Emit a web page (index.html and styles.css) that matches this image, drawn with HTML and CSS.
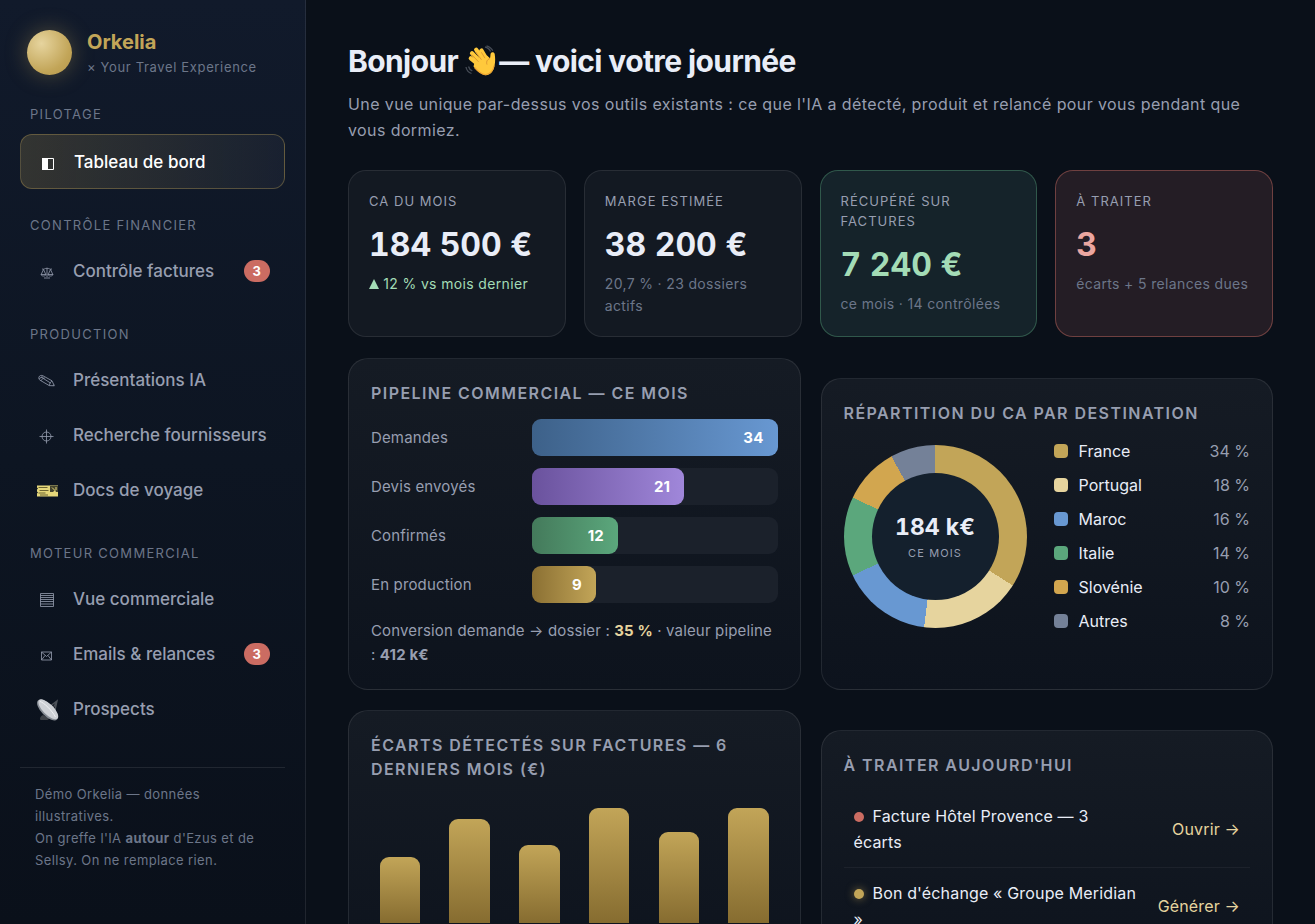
FILE: index.html
```html
<!DOCTYPE html>
<html lang="fr">
<head>
  <meta charset="UTF-8" />
  <meta name="viewport" content="width=device-width, initial-scale=1.0" />
  <title>Orkelia — Tableau de bord</title>
  <link rel="stylesheet" href="styles.css">
</head>
<body>
  <div class="app">
    <aside class="sidebar">
      <div class="brand">
        <div class="brand-orb"></div>
        <div>
          <div class="brand-name">Orkelia</div>
          <div class="brand-sub">× Your Travel Experience</div>
        </div>
      </div>

      <nav>
        <div class="nav-label">Pilotage</div>
        <a href="#dashboard" class="nav-item active">
          <svg class="ico" viewBox="0 0 22 22"><path d="M5.5 7.500h11v11h-11z" fill="none" stroke="currentColor"/><path d="M5 7h6v12H5z" fill="currentColor"/></svg>
          <span>Tableau de bord</span>
        </a>

        <div class="nav-label">Contrôle financier</div>
        <a href="#factures" class="nav-item">
          <svg class="ico thin" viewBox="0 0 22 22"><path d="M11 8v9M8 18h6M6 9c2 .8 3-.8 5-.8s3 1.600 5 .8M7.500 9.500l-2.300 5M7.500 9.500l2.300 5M14.500 9.500l-2.300 5M14.500 9.500l2.300 5M5 14.500c.5 2 4.500 2 5 0zM12 14.500c.5 2 4.500 2 5 0z"/></svg>
          <span>Contrôle factures</span>
          <span class="badge">3</span>
        </a>

        <div class="nav-label">Production</div>
        <a href="#presentations" class="nav-item">
          <svg class="ico thin" viewBox="0 0 22 22"><path d="M3 8c.6-1.600 2.500-2 4-1.200l9 5 2.300 5-5-.2-9.300-5.400C3 10.500 2.500 9.200 3 8zM3.500 10c.6-1.600 2-2.300 3.700-1.800M5.500 11.500c.4-1.500 1.700-2.500 3.300-2.500M13.300 16.600c.2-1.900 1.300-3.800 2.700-4.800M5 8l9.500 6M17.900 15.700l-.9 1"/></svg>
          <span>Présentations IA</span>
        </a>
        <a href="#fournisseurs" class="nav-item">
          <svg class="ico thin" viewBox="0 0 22 22"><circle cx="10.500" cy="12.500" r="4.500"/><path d="M10.500 5.500v14M3.500 12.500h14"/></svg>
          <span>Recherche fournisseurs</span>
        </a>
        <a href="#docs" class="nav-item">
          <svg class="ico" viewBox="0 0 22 22"><path d="M1 6.500h21v11H1v-3l1-1-1-1v-2l1-1-1-1z" fill="#e5d77a"/><path d="M2.500 8.500h9M3.500 11.500h9M2.500 14h7M4 16h8" stroke="#6d6532" stroke-width="1"/><path d="M14 7h8v6h-2l-1-2-2 2h-3z" fill="#45452e"/><path d="M16 8.500l3 3M20 8v3" stroke="#e5d77a"/></svg>
          <span>Docs de voyage</span>
        </a>

        <div class="nav-label">Moteur commercial</div>
        <a href="#ventes" class="nav-item">
          <svg class="ico thin" viewBox="0 0 22 22"><path d="M4.500 5.500h13v13h-13zM4.500 7.500h13M4.500 9.500h13M4.500 11.500h13M4.500 13.500h13M4.500 16h13"/></svg>
          <span>Vue commerciale</span>
        </a>
        <a href="#emails" class="nav-item">
          <svg class="ico thin" viewBox="0 0 22 22"><path d="M5.500 9h10v8h-10zM5.500 9l5 4.500 5-4.500M5.500 17L9 12.500M15.500 17L12 12.500"/></svg>
          <span>Emails &amp; relances</span>
          <span class="badge">3</span>
        </a>
        <a href="#prospects" class="nav-item">
          <svg class="ico" viewBox="0 0 22 22"><path d="M4 21c0-2 1-3 3-4l6 3c0 1.500-1 2-3 2H6c-1 0-2 0-2-1z" fill="#3d4147"/><path d="M13 9l8-6-2 9M21 3l-5 9" stroke="#4c5158" stroke-width="1.400" fill="none"/><ellipse cx="11.500" cy="12" rx="13.500" ry="6" transform="rotate(45 11.500 12)" fill="#878d95"/><ellipse cx="12.300" cy="11.300" rx="13" ry="5.300" transform="rotate(45 12.300 11.300)" fill="#ced1d6"/><path d="M4 3.500c4 1 12 9 15.500 15.500" stroke="#f0f1f4" fill="none"/></svg>
          <span>Prospects</span>
        </a>
      </nav>

      <div class="side-foot">
        Démo Orkelia — données illustratives.<br>
        On greffe l'IA <b>autour</b> d'Ezus et de Sellsy. On ne remplace rien.
      </div>
    </aside>

    <main class="main">
      <h1>Bonjour
        <svg class="wave" viewBox="0 0 32 32"><g stroke="#ffc93c" stroke-width="4.200" stroke-linecap="round"><path d="M16.500 18L7 8.200M19 15.500L11.200 4.800M21.500 14L16.500 5.500M14.500 20.500L5.800 13.300"/></g><path d="M10 15.500L22 10.500l3 2.800c.6-2 .2-3.800.8-5 .8-1.500 3.600-1.200 3.900.8.500 3.500.8 7-.2 12C28.300 27.500 24 31 19.500 30c-3-.7-6.500-4-11-8.500z" fill="#ffc93c"/><path d="M13.500 16.800L6.800 9.600M16.500 14.800L10.800 7M20 13.200l-3.700-6" stroke="#dd9630" stroke-width=".9" fill="none"/><path d="M9.500 22.500c4 4.500 8 7.500 11.500 7 5-.8 7.500-5 8-9" stroke="#eda331" stroke-width="1.200" fill="none"/><path d="M25 13.500c-3 1-4 3.500-3 6" stroke="#dd9630" fill="none"/><path d="M1 22c.5 3 2.500 5.500 5.500 6.500M3.500 21.500c.5 2 2 3.500 3.800 4.300M20 2c2.500.5 4.500 2 5.500 4.500M21.500 .8c3 .7 5 2.300 6.300 5" stroke="#454b55" stroke-width="1.300" fill="none"/></svg>
        — voici votre journée</h1>
      <p class="lead">Une vue unique par-dessus vos outils existants : ce que l'IA a détecté, produit et relancé pour vous pendant que vous dormiez.</p>

      <section class="kpis">
        <div class="kpi">
          <div class="kpi-label">CA du mois</div>
          <div class="kpi-value">184 500 €</div>
          <div class="kpi-note up"><svg class="tri" viewBox="0 0 10 10"><path d="M5 0l5 10H0z" fill="currentColor"/></svg> 12 % vs mois dernier</div>
        </div>
        <div class="kpi">
          <div class="kpi-label">Marge estimée</div>
          <div class="kpi-value">38 200 €</div>
          <div class="kpi-note">20,7 % · 23 dossiers actifs</div>
        </div>
        <div class="kpi good">
          <div class="kpi-label">Récupéré sur factures</div>
          <div class="kpi-value">7 240 €</div>
          <div class="kpi-note">ce mois · 14 contrôlées</div>
        </div>
        <div class="kpi alert">
          <div class="kpi-label">À traiter</div>
          <div class="kpi-value">3</div>
          <div class="kpi-note">écarts + 5 relances dues</div>
        </div>
      </section>

      <div class="grid2">
        <section class="panel">
          <h3>Pipeline commercial — ce mois</h3>
          <div class="funnel">
            <div class="f-row"><span>Demandes</span><div class="f-track"><div class="f-bar blue" style="width:100%">34</div></div></div>
            <div class="f-row"><span>Devis envoyés</span><div class="f-track"><div class="f-bar violet" style="width:62%">21</div></div></div>
            <div class="f-row"><span>Confirmés</span><div class="f-track"><div class="f-bar green" style="width:35%">12</div></div></div>
            <div class="f-row"><span>En production</span><div class="f-track"><div class="f-bar gold" style="width:26%">9</div></div></div>
          </div>
          <p class="note">Conversion demande → dossier : <b class="gold-txt">35 %</b> · valeur pipeline : <b>412 k€</b></p>
        </section>

        <section class="panel">
          <h3>Répartition du CA par destination</h3>
          <div class="donut-wrap">
            <div class="donut">
              <div class="donut-hole">
                <b>184 k€</b>
                <span>CE MOIS</span>
              </div>
            </div>
            <ul class="legend">
              <li><i class="c-france"></i>France<span>34 %</span></li>
              <li><i class="c-portugal"></i>Portugal<span>18 %</span></li>
              <li><i class="c-maroc"></i>Maroc<span>16 %</span></li>
              <li><i class="c-italie"></i>Italie<span>14 %</span></li>
              <li><i class="c-slovenie"></i>Slovénie<span>10 %</span></li>
              <li><i class="c-autres"></i>Autres<span>8 %</span></li>
            </ul>
          </div>
        </section>
      </div>

      <div class="grid2">
        <section class="panel">
          <h3>Écarts détectés sur factures — 6 derniers mois (€)</h3>
          <div class="bars">
            <div class="bar" style="height:66px"></div>
            <div class="bar" style="height:104px"></div>
            <div class="bar" style="height:78px"></div>
            <div class="bar" style="height:115px"></div>
            <div class="bar" style="height:91px"></div>
            <div class="bar" style="height:115px"></div>
          </div>
        </section>

        <section class="panel">
          <h3>À traiter aujourd'hui</h3>
          <table class="tasks">
            <tr>
              <td><i class="dot red"></i>Facture Hôtel Provence — 3 écarts</td>
              <td class="act"><a href="#factures">Ouvrir →</a></td>
            </tr>
            <tr>
              <td><i class="dot amber"></i>Bon d'échange « Groupe Meridian »</td>
              <td class="act"><a href="#docs">Générer →</a></td>
            </tr>
          </table>
        </section>
      </div>
    </main>
  </div>
</body>
</html>
```
FILE: styles.css
```css
:root {
  --txt: #e9edf7;
  --muted: #979eb0;
  --dim: #6c7689;
  --gold: #c2a558;
  --gold-light: #e6d49e;
  --line: rgba(255, 255, 255, 0.09);
}

* {
  box-sizing: border-box;
}

body {
  margin: 0;
  background: #0a1019;
  color: var(--txt);
  font-family: Inter, "Liberation Sans", sans-serif;
  font-size: 16px;
  line-height: 26px;
}

a {
  text-decoration: none;
}

.app {
  display: grid;
  grid-template-columns: 306px minmax(0, 1fr);
}

/* sidebar */
.sidebar {
  position: sticky;
  top: 0;
  height: 100vh;
  padding: 30px 20px 20px;
  border-right: 1px solid var(--line);
  background: linear-gradient(180deg, #111a2b, #0d1522 50%, #0a101a);
}

.brand {
  display: flex;
  align-items: center;
  gap: 15px;
  padding-left: 7px;
  margin-bottom: 31px;
}

.brand-orb {
  width: 45px;
  height: 45px;
  border-radius: 50%;
  background: radial-gradient(circle at 32% 30%, #e6d49e, #c2a558 65%, #b3954a);
  box-shadow: 0 0 22px rgba(194, 165, 88, 0.35);
}

.brand-name {
  color: var(--gold);
  font-size: 20px;
  font-weight: 700;
  line-height: 24px;
}

.brand-sub {
  color: var(--dim);
  font-size: 13px;
  line-height: 26px;
  letter-spacing: 0.05em;
  margin-bottom: -5px;
}

.nav-label {
  padding: 28px 10px 10px;
  color: var(--dim);
  font-size: 13px;
  line-height: 16px;
  letter-spacing: 0.1em;
  text-transform: uppercase;
}

.nav-label:first-child {
  padding-top: 0;
  padding-bottom: 12px;
}

.nav-item {
  display: flex;
  align-items: center;
  gap: 15px;
  height: 55px;
  padding: 0 15px 0 16px;
  border-radius: 12px;
  color: var(--muted);
  font-size: 17px;
  font-weight: 500;
  white-space: nowrap;
}

.nav-item.active {
  border: 1px solid rgba(194, 165, 88, 0.35);
  background: linear-gradient(90deg, rgba(194, 165, 88, 0.2), rgba(255, 255, 255, 0.04));
  color: #fff;
}

.ico {
  flex: none;
  width: 22px;
  height: 22px;
  overflow: visible;
}

.ico.thin {
  fill: none;
  stroke: currentColor;
  stroke-width: 0.8;
}

.badge {
  margin-left: auto;
  padding: 0 9px;
  border-radius: 11px;
  background: #cb6c62;
  color: #fff;
  font-size: 13px;
  font-weight: 700;
  line-height: 22px;
}

.side-foot {
  margin-top: 31px;
  padding: 15px;
  border-top: 1px solid var(--line);
  color: var(--dim);
  font-size: 13px;
  line-height: 22px;
  letter-spacing: 0.03em;
}

/* content */
.main {
  padding: 42px;
}

h1 {
  margin: 0 0 10px;
  font-size: 30px;
  line-height: 39px;
  letter-spacing: -0.02em;
}

.wave {
  width: 32px;
  height: 32px;
  vertical-align: -5px;
  margin-right: -4px;
  overflow: visible;
}

.lead {
  margin: 0 0 27px;
  color: var(--muted);
  font-size: 16px;
  letter-spacing: 0.025em;
}

.kpis {
  display: grid;
  grid-template-columns: repeat(4, 1fr);
  gap: 18px;
  margin-bottom: 21px;
}

.kpi {
  padding: 20px 20px 19px;
  border: 1px solid var(--line);
  border-radius: 18px;
  background: #131922;
}

.kpi.good {
  border-color: rgba(91, 167, 124, 0.4);
  background: #15232a;
}

.kpi.alert {
  border-color: rgba(203, 108, 98, 0.45);
  background: #241d25;
}

.kpi-label {
  color: var(--muted);
  font-size: 13px;
  line-height: 20px;
  letter-spacing: 0.08em;
  text-transform: uppercase;
}

.kpi-value {
  margin: 14px 0 9px;
  font-size: 32px;
  font-weight: 700;
  line-height: 39px;
  font-variant-numeric: tabular-nums;
}

.good .kpi-value {
  color: #a3dcb6;
}

.alert .kpi-value {
  color: #eba6a0;
}

.kpi-note {
  color: var(--dim);
  font-size: 14px;
  line-height: 22px;
  letter-spacing: 0.025em;
}

.kpi-note.up {
  color: #a3dcb6;
}

.tri {
  width: 10px;
  height: 10px;
}

.grid2 {
  display: grid;
  grid-template-columns: 1fr 1fr;
  gap: 20px;
  margin-bottom: 20px;
}

.panel {
  padding: 22px;
  border: 1px solid var(--line);
  border-radius: 20px;
  background: linear-gradient(180deg, #151b24, #0d131d);
}

.panel + .panel {
  margin-top: 20px;
}

h3 {
  margin: 0 0 14px;
  color: var(--muted);
  font-size: 16px;
  font-weight: 600;
  line-height: 24px;
  letter-spacing: 0.09em;
  text-transform: uppercase;
}

.funnel {
  display: grid;
  gap: 12px;
}

.f-row {
  display: grid;
  grid-template-columns: 150px 1fr;
  gap: 11px;
  align-items: center;
  color: var(--muted);
  font-size: 15px;
  letter-spacing: 0.01em;
}

.f-track {
  border-radius: 9px;
  background: #1b212b;
}

.f-bar {
  height: 37px;
  padding-right: 14px;
  border-radius: 9px;
  color: #fff;
  font-weight: 700;
  line-height: 37px;
  text-align: right;
}

.blue { background: linear-gradient(90deg, #3d6189, #6898d2); }
.violet { background: linear-gradient(90deg, #6a529d, #a087da); }
.green { background: linear-gradient(90deg, #447a5b, #5ba77c); }
.gold { background: linear-gradient(90deg, #8b7033, #c2a558); }

.note {
  margin: 16px 0 0;
  color: var(--muted);
  font-size: 15px;
  line-height: 24px;
  letter-spacing: 0.01em;
}

.gold-txt {
  color: var(--gold-light);
}

.donut-wrap {
  display: flex;
  align-items: center;
  gap: 27px;
  margin-top: -5px;
}

.donut {
  flex: none;
  width: 183px;
  height: 183px;
  padding: 28px;
  border-radius: 50%;
  background: conic-gradient(#c2a558 0 34%, #e6d49e 34% 52%, #6898d2 52% 68%, #5ba77c 68% 82%, #d2a64f 82% 92%, #748198 92%);
}

.donut-hole {
  display: flex;
  flex-direction: column;
  align-items: center;
  justify-content: center;
  height: 100%;
  padding-top: 6px;
  border-radius: 50%;
  background: #14202d;
}

.donut-hole b {
  font-size: 23px;
  line-height: 28px;
  font-variant-numeric: tabular-nums;
}

.donut-hole span {
  color: var(--muted);
  font-size: 11px;
  line-height: 24px;
  letter-spacing: 0.1em;
}

.legend {
  flex: 1;
  margin: 0;
  padding: 0;
  list-style: none;
}

.legend li {
  display: flex;
  align-items: center;
  height: 34px;
}

.legend i {
  width: 14px;
  height: 14px;
  margin-right: 11px;
  border-radius: 4px;
}

.legend span {
  margin-left: auto;
  color: var(--muted);
}

.c-france { background: #c2a558; }
.c-portugal { background: #e6d49e; }
.c-maroc { background: #6898d2; }
.c-italie { background: #5ba77c; }
.c-slovenie { background: #d2a64f; }
.c-autres { background: #748198; }

.bars {
  display: grid;
  grid-template-columns: repeat(6, 1fr);
  gap: 12px;
  align-items: end;
  justify-items: center;
  height: 128px;
  margin-bottom: 40px;
}

.bar {
  width: 70%;
  border-radius: 9px 9px 0 0;
  background: linear-gradient(180deg, #c2a558, #866c30);
}

.tasks {
  width: 100%;
  border-collapse: collapse;
  font-size: 16px;
  letter-spacing: 0.01em;
}

.tasks td {
  padding: 12px 10px;
  border-bottom: 1px solid rgba(255, 255, 255, 0.05);
}

.tasks .act {
  width: 1%;
  text-align: right;
  white-space: nowrap;
}

.tasks a {
  color: var(--gold-light);
}

.dot {
  display: inline-block;
  width: 10px;
  height: 10px;
  margin-right: 9px;
  border-radius: 50%;
}

.dot.red {
  background: #cb6c62;
}

.dot.amber {
  background: #c2a558;
  box-shadow: 0 0 8px rgba(194, 165, 88, 0.6);
}
```
